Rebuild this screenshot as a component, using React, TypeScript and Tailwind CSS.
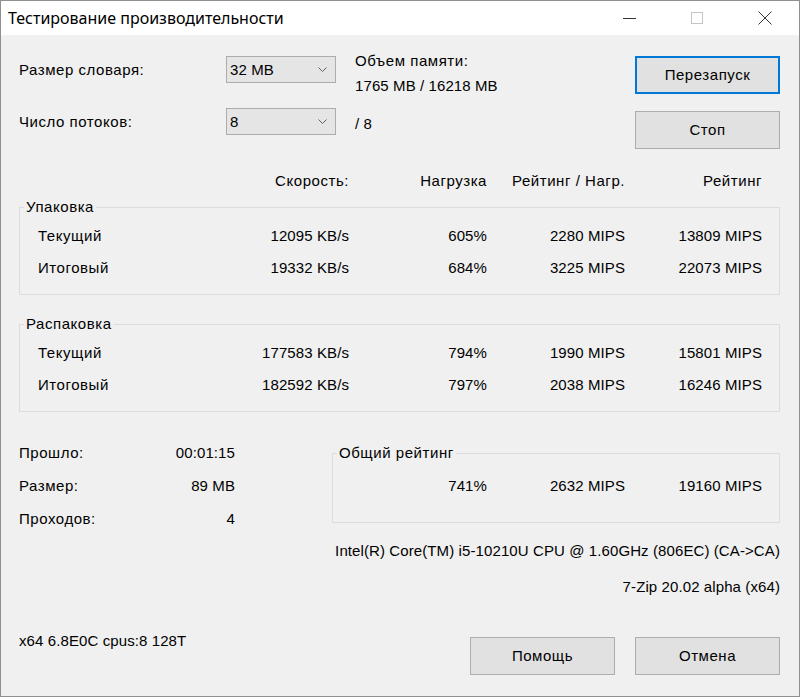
import clsx from "clsx";

type Row = [string, string, string, string, string];

const packRows: Row[] = [
  ["Текущий", "12095 KB/s", "605%", "2280 MIPS", "13809 MIPS"],
  ["Итоговый", "19332 KB/s", "684%", "3225 MIPS", "22073 MIPS"],
];

const unpackRows: Row[] = [
  ["Текущий", "177583 KB/s", "794%", "1990 MIPS", "15801 MIPS"],
  ["Итоговый", "182592 KB/s", "797%", "2038 MIPS", "16246 MIPS"],
];

const cols = "grid grid-cols-[200px_129px_138px_138px_137px]";
// cyrillic in the original dialog font runs a bit wider than Liberation Sans
const cy = "tracking-[0.55px]";

function WinButton({ children, focused, className }: { children: React.ReactNode; focused?: boolean; className?: string }) {
  return (
    <button
      className={clsx(
        "h-[38px] w-[145px] bg-[#e1e1e1] text-[15px] leading-[18px] text-black",
        cy,
        focused ? "border-2 border-[#0078d7]" : "border border-[#adadad]",
        className,
      )}
    >
      {children}
    </button>
  );
}

function Combo({ value }: { value: string }) {
  return (
    <div className="flex h-[27px] w-[110px] items-center justify-between border border-[#acacac] bg-[#e5e5e5] pl-[3px] pr-[8px]">
      <span>{value}</span>
      <svg width="9" height="5" viewBox="0 0 9 5">
        <path d="M0.5 0.5 L4.5 4.5 L8.5 0.5" stroke="#606060" fill="none" />
      </svg>
    </div>
  );
}

function Group({ title, rows, className }: { title: string; rows: Row[]; className?: string }) {
  return (
    <fieldset className={clsx("min-w-0 border border-[#dcdcdc] pb-[17px]", className)}>
      <legend className={clsx("ml-[4px] px-[2px] leading-[18px]", cy)}>{title}</legend>
      {rows.map((r, i) => (
        <div key={r[0]} className={clsx(cols, i === 0 ? "mt-[11px]" : "mt-[14px]")}>
          <span className={clsx("pl-[18px]", cy)}>{r[0]}</span>
          <span className="text-right">{r[1]}</span>
          <span className="text-right">{r[2]}</span>
          <span className="text-right">{r[3]}</span>
          <span className="text-right">{r[4]}</span>
        </div>
      ))}
    </fieldset>
  );
}

export default function App() {
  return (
    <div className="flex h-[697px] w-[800px] flex-col border border-[#8f8f8f] bg-[#f0f0f0] font-['Liberation_Sans',Arial,sans-serif] text-[15px] leading-[18px] tracking-[0.1px] text-black">
      {/* title bar */}
      <div className="flex h-[34px] shrink-0 items-center bg-white">
        <span className="pl-[7px] font-['Noto_Sans',sans-serif] text-[16px] tracking-normal">Тестирование производительности</span>
        <div className="ml-auto flex h-full">
          <div className="flex w-[68px] items-center justify-center">
            <div className="h-px w-[13px] bg-[#333]" />
          </div>
          <div className="flex w-[68px] items-center justify-center">
            <div className="h-[12px] w-[12px] border border-[#c4c4c4]" />
          </div>
          <div className="flex w-[68px] items-center justify-center">
            <svg width="14" height="14" viewBox="0 0 14 14">
              <path d="M0.5 0.5 L13.5 13.5 M13.5 0.5 L0.5 13.5" stroke="#333" strokeWidth="1" fill="none" />
            </svg>
          </div>
        </div>
      </div>

      <div className="flex flex-1 flex-col pl-[18px] pr-[19px]">
        {/* top controls */}
        <div className="flex pt-[17px]">
          <div className="flex flex-col">
            <div className="mt-[4px] flex items-center">
              <span className={clsx("w-[207px]", cy)}>Размер словаря:</span>
              <Combo value="32 MB" />
            </div>
            <div className="mt-[25px] flex items-center">
              <span className={clsx("w-[207px]", cy)}>Число потоков:</span>
              <Combo value="8" />
            </div>
          </div>
          <div className="ml-[19px] flex flex-col">
            <span className={cy}>Объем памяти:</span>
            <span className="mt-[7px]">1765 MB / 16218 MB</span>
            <span className="mt-[20px]">/ 8</span>
          </div>
          <div className="ml-auto flex flex-col">
            <WinButton focused className="mt-[4px]">Перезапуск</WinButton>
            <WinButton className="mt-[17px]">Стоп</WinButton>
          </div>
        </div>

        {/* header */}
        <div className={clsx(cols, "ml-px mt-[23px]", cy)}>
          <span />
          <span className="text-right">Скорость:</span>
          <span className="text-right">Нагрузка</span>
          <span className="text-right">Рейтинг / Нагр.</span>
          <span className="text-right">Рейтинг</span>
        </div>

        <Group title="Упаковка" rows={packRows} className="mt-[8px]" />
        <Group title="Распаковка" rows={unpackRows} className="mt-[20px]" />

        {/* totals */}
        <div className="mt-[32px] flex items-start">
          <div className="flex w-[216px] flex-col gap-[15px]">
            <div className="flex justify-between"><span className={cy}>Прошло:</span><span>00:01:15</span></div>
            <div className="flex justify-between"><span className={cy}>Размер:</span><span>89 MB</span></div>
            <div className="flex justify-between"><span className={cy}>Проходов:</span><span>4</span></div>
          </div>
          <fieldset className="ml-[97px] min-w-0 flex-1 border border-[#dcdcdc] pb-[27px]">
            <legend className={clsx("ml-[4px] px-[2px] leading-[18px]", cy)}>Общий рейтинг</legend>
            <div className="mt-[15px] grid grid-cols-[154px_138px_137px]">
              <span className="text-right">741%</span>
              <span className="text-right">2632 MIPS</span>
              <span className="text-right">19160 MIPS</span>
            </div>
          </fieldset>
        </div>

        <div className="mt-[14px] text-right">Intel(R) Core(TM) i5-10210U CPU @ 1.60GHz (806EC) (CA-&gt;CA)</div>
        <div className="mt-[18px] text-right">7-Zip 20.02 alpha (x64)</div>

        <div className="mt-[36px] flex items-start justify-between">
          <span>x64 6.8E0C cpus:8 128T</span>
          <div className="mt-[5px] flex gap-[20px]">
            <WinButton>Помощь</WinButton>
            <WinButton>Отмена</WinButton>
          </div>
        </div>
      </div>
    </div>
  );
}
